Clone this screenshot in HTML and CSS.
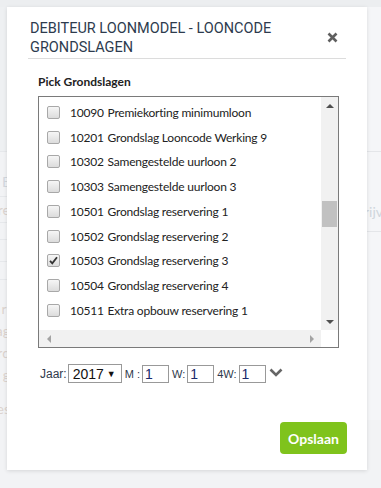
FILE: index.html
```html
<!DOCTYPE html>
<html lang="nl">
<head>
    <meta charset="UTF-8">
    <meta name="viewport" content="width=device-width, initial-scale=1.0">
    <title>Debiteur loonmodel</title>
    <link rel="stylesheet" href="styles.css">
</head>
<body>
    <!-- pagina achter de modal -->
    <div class="page">
        <div class="page-top"></div>
        <div class="page-body">
            <div class="side">
                <div class="side-row r1"></div>
                <div class="side-row r2">Beschrijving E</div>
                <div class="side-row r3">Omschrijving re</div>
                <div class="side-row r4"></div>
                <div class="side-row r5"></div>
                <div class="side-row r6"></div>
                <div class="side-text">Looncode ri</div>
                <div class="side-text">Grondslag</div>
                <div class="side-text">Standaard</div>
                <div class="side-text">Opbouw g</div>
                <div class="side-text s2">Periodes</div>
            </div>
            <div class="main">
                <div class="main-row tall"></div>
                <div class="main-row">Beschrijv</div>
            </div>
        </div>
    </div>

    <div class="modal">
        <div class="modal-header">
            <h2>Debiteur loonmodel - looncode grondslagen</h2>
            <button class="close" title="Sluiten">
                <svg width="11" height="11" viewBox="0 0 11 11">
                    <path d="M1.5 1.5 L9.5 9.5 M9.5 1.5 L1.5 9.5" stroke="#5f5f5f" stroke-width="2.6" stroke-linecap="butt"/>
                </svg>
            </button>
        </div>

        <div class="modal-body">
            <div class="pick-label">Pick Grondslagen</div>

            <div class="pick-box">
                <div class="pick-list">
                    <div class="pick-item"><span class="check"></span><span class="code">10090</span><span class="name">Premiekorting minimumloon</span></div>
                    <div class="pick-item"><span class="check"></span><span class="code">10201</span><span class="name">Grondslag Looncode Werking 9</span></div>
                    <div class="pick-item"><span class="check"></span><span class="code">10302</span><span class="name">Samengestelde uurloon 2</span></div>
                    <div class="pick-item"><span class="check"></span><span class="code">10303</span><span class="name">Samengestelde uurloon 3</span></div>
                    <div class="pick-item"><span class="check"></span><span class="code">10501</span><span class="name">Grondslag reservering 1</span></div>
                    <div class="pick-item"><span class="check"></span><span class="code">10502</span><span class="name">Grondslag reservering 2</span></div>
                    <div class="pick-item"><span class="check checked"><svg width="11" height="11" viewBox="0 0 11 11"><path d="M2 5.8 L4.3 8.3 L9 2.2" fill="none" stroke="#333" stroke-width="1.8"/></svg></span><span class="code">10503</span><span class="name">Grondslag reservering 3</span></div>
                    <div class="pick-item"><span class="check"></span><span class="code">10504</span><span class="name">Grondslag reservering 4</span></div>
                    <div class="pick-item"><span class="check"></span><span class="code">10511</span><span class="name">Extra opbouw reservering 1</span></div>
                </div>
                <div class="vscroll">
                    <span class="arrow"><span class="tri up"></span></span>
                    <span class="track"><span class="thumb"></span></span>
                    <span class="arrow"><span class="tri down"></span></span>
                </div>
                <div class="hscroll">
                    <span class="arrow"><span class="tri left"></span></span>
                    <span class="arrow"><span class="tri right"></span></span>
                </div>
                <div class="corner"></div>
            </div>

            <div class="period">
                <label for="jaar">Jaar:</label>
                <div class="select-box">
                    <select id="jaar">
                        <option>2017</option>
                        <option>2018</option>
                    </select>
                    <span class="select-arrow">&#9660;</span>
                </div>
                <label for="maand" class="small">M :</label>
                <input type="text" id="maand" value="1">
                <label for="week" class="small">W:</label>
                <input type="text" id="week" value="1">
                <label for="week4" class="small">4W:</label>
                <input type="text" id="week4" value="1">
                <svg class="chevron" width="14" height="9" viewBox="0 0 14 9">
                    <path d="M1.5 1.5 L7 7 L12.5 1.5" fill="none" stroke="#666" stroke-width="2.6"/>
                </svg>
            </div>
        </div>

        <div class="modal-footer">
            <button class="save">Opslaan</button>
        </div>
    </div>
</body>
</html>
```

FILE: styles.css
```css
body {
    margin: 0;
    font-family: Lato, "Open Sans", sans-serif;
    background-color: #f2f3f5;
    overflow: hidden;
}

/* achtergrondpagina */
.page {
    height: 488px;
}

.page-top {
    height: 7px;
    background-color: #eceef0;
}

.page-body {
    display: flex;
}

.side {
    width: 160px;
    margin-left: -150px;
    font-size: 14px;
    color: #dcd3cf;
    text-align: right;
}

.side-row {
    border-bottom: 1px solid #e6e8eb;
    white-space: nowrap;
}

.side-row.r1 {
    height: 144px;
    background-color: #eef0f2;
}

.side-row.r2 {
    height: 44px;
    line-height: 60px;
    color: #d3d8de;
}

.side-row.r3 {
    height: 25px;
    line-height: 25px;
}

.side-row.r4 {
    height: 16px;
}

.side-row.r5 {
    height: 21px;
}

.side-row.r6 {
    height: 17px;
    margin-bottom: 18px;
}

.side-text {
    height: 22px;
    line-height: 22px;
    white-space: nowrap;
}

.side-text.s2 {
    margin-top: 12px;
}

.main {
    flex: 1;
    border-left: 1px solid #e6e8ea;
    background-color: #f5f6f8;
    font-size: 14px;
    color: #d0d6dd;
}

.main-row {
    height: 79px;
    line-height: 120px;
    border-bottom: 1px solid #e4e6e9;
    white-space: nowrap;
    direction: rtl;
    margin-right: -2px;
}

.main-row.tall {
    height: 144px;
}

/* modal */
.modal {
    position: absolute;
    top: 7px;
    left: 7px;
    width: 360px;
    height: 463px;
    background-color: white;
    box-shadow: 0 1px 4px rgba(0,0,0,0.12);
    display: flex;
    flex-direction: column;
}

.modal-header {
    display: flex;
    align-items: center;
    justify-content: space-between;
    margin: 0 21px;
    padding: 12px 8px 1px 2px;
    border-bottom: 1px solid #dcdcdc;
}

.modal-header h2 {
    margin: 0;
    font-family: Roboto, sans-serif;
    font-size: 14.5px;
    font-weight: normal;
    line-height: 19px;
    text-transform: uppercase;
    color: #2d3b4e;
    width: 255px;
}

.close {
    border: none;
    background: none;
    padding: 0;
    margin-top: -1px;
    cursor: pointer;
    display: flex;
}

.modal-body {
    padding: 15px 28px 0 31px;
}

.pick-label {
    font-size: 12px;
    font-weight: bold;
    color: #222;
    margin-bottom: 7px;
}

.pick-box {
    height: 250px;
    border: 1px solid #7a7a7a;
    display: grid;
    grid-template-columns: 1fr 17px;
    grid-template-rows: 1fr 17px;
}

.pick-list {
    overflow: hidden;
    padding-top: 3px;
}

.pick-item {
    height: 24.75px;
    display: flex;
    align-items: center;
    padding-left: 8px;
    font-size: 12px;
    letter-spacing: -0.2px;
    color: #222;
    white-space: nowrap;
}

.check {
    width: 11px;
    height: 11px;
    border: 1px solid #a8a8a8;
    border-radius: 2px;
    background: linear-gradient(#f6f6f6, #dcdcdc);
    margin-right: 10px;
    display: flex;
}

.code {
    width: 37.5px;
    flex-shrink: 0;
}

.vscroll {
    background-color: #f1f1f1;
    display: flex;
    flex-direction: column;
}

.arrow {
    width: 17px;
    height: 17px;
    display: flex;
    align-items: center;
    justify-content: center;
}

.track {
    flex: 1;
}

.thumb {
    display: block;
    margin: 87px 1px 0 1px;
    height: 26px;
    background-color: #c1c1c1;
}

.tri {
    width: 0;
    height: 0;
    border: 4px solid transparent;
}

.tri.up {
    border-bottom-color: #505050;
    border-top-width: 0;
}

.tri.down {
    border-top-color: #505050;
    border-bottom-width: 0;
}

.tri.left {
    border-right-color: #a3a3a3;
    border-left-width: 0;
}

.tri.right {
    border-left-color: #a3a3a3;
    border-right-width: 0;
}

.hscroll {
    background-color: #f1f1f1;
    display: flex;
    justify-content: space-between;
    padding: 0 1px;
}

.corner {
    background-color: white;
}

/* jaar / periode */
.period {
    display: flex;
    align-items: center;
    margin-top: 16px;
    padding-left: 2px;
    font-family: "Liberation Sans", Arial, sans-serif;
    font-size: 12px;
    color: #2f3a4c;
}

.period label {
    margin-right: 1px;
}

.period label.small {
    font-size: 11px;
    margin-right: 2px;
}

.select-box {
    display: flex;
    align-items: center;
    width: 52px;
    height: 17px;
    border: 1px solid #999;
    margin-right: 3px;
}

.select-box select {
    appearance: none;
    -webkit-appearance: none;
    border: none;
    background: none;
    padding: 0 0 0 4px;
    width: 38px;
    font-family: "Liberation Sans", Arial, sans-serif;
    font-size: 14px;
    color: #111;
    outline: none;
}

.select-arrow {
    font-size: 9px;
    color: #111;
}

.period input {
    box-sizing: border-box;
    width: 27px;
    height: 18px;
    border: 1px solid #999;
    padding: 0 0 0 2px;
    margin: 0 3px 0 0;
    font-family: "Liberation Sans", Arial, sans-serif;
    font-size: 14px;
    color: #1a2a6c;
}

.chevron {
    margin-top: -2px;
}

.modal-footer {
    margin-top: auto;
    display: flex;
    justify-content: flex-end;
    padding: 0 20px 16px 0;
}

.save {
    background-color: #7fc31c;
    color: white;
    border: none;
    border-radius: 4px;
    width: 67px;
    height: 32px;
    font-family: Lato, sans-serif;
    font-size: 14px;
    font-weight: bold;
    cursor: pointer;
}

.save:hover {
    background-color: #72b214;
}
```
